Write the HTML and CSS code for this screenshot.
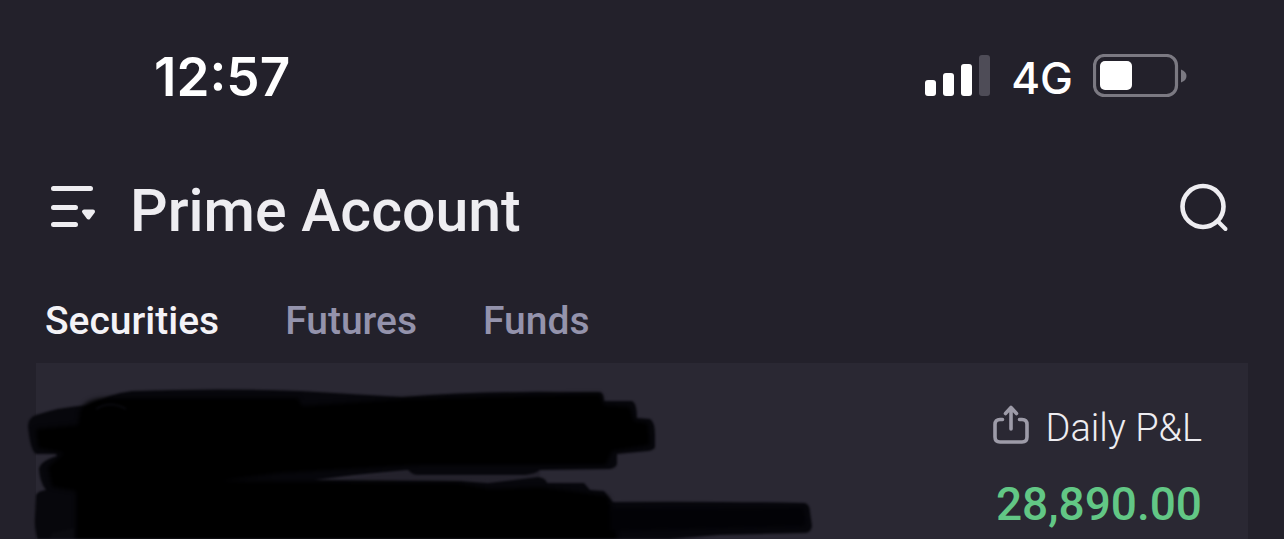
FILE: index.html
```html
<!DOCTYPE html>
<html lang="en">
<head>
<meta charset="utf-8">
<meta name="viewport" content="width=device-width, initial-scale=1">
<title>Prime Account</title>
<link rel="stylesheet" href="styles.css">
</head>
<body>
<div class="status-bar">
  <time class="clock">12:57</time>
  <div class="indicators">
    <svg class="signal" width="66" height="42" viewBox="0 0 66 42" aria-label="Signal strength">
      <rect x="0" y="25" width="11" height="16" rx="3" fill="#fff"/>
      <rect x="18" y="18" width="11" height="23" rx="3" fill="#fff"/>
      <rect x="36" y="9" width="11" height="32" rx="3" fill="#fff"/>
      <rect x="54" y="0" width="11" height="41" rx="3" fill="#4e4c57"/>
    </svg>
    <span class="network">4G</span>
    <svg class="battery" width="94" height="44" viewBox="0 0 94 44" aria-label="Battery">
      <rect x="1.5" y="1.5" width="82" height="40" rx="10" fill="none" stroke="#7b7982" stroke-width="3.2"/>
      <rect x="7" y="7" width="32" height="29" rx="5" fill="#fff"/>
      <path d="M88 15.5Q93.5 17.500 93.500 22T88 28.500Z" fill="#7b7982"/>
    </svg>
  </div>
</div>
<header class="header">
  <button class="icon-button" type="button" aria-label="Switch account">
    <svg width="46" height="44" viewBox="0 0 46 44" fill="none" stroke="#eeedf1" stroke-width="5" stroke-linecap="round">
      <path d="M3.500 2.500H40.500M3.500 21.500H25.500M3.500 38.500H25.500"/>
      <path d="M34 25.500H43L38.500 31.500Z" fill="#eeedf1" stroke-width="4" stroke-linejoin="round"/>
    </svg>
  </button>
  <h1 class="title">Prime Account</h1>
  <button class="icon-button search" type="button" aria-label="Search">
    <svg width="50" height="50" viewBox="0 0 50 50" fill="none" stroke="#eeedf1" stroke-linecap="round">
      <circle cx="24" cy="23.500" r="20.500" stroke-width="4.600"/>
      <path d="M39 38.500L46.500 46" stroke-width="4"/>
    </svg>
  </button>
</header>
<nav class="tabs">
  <a class="tab active" href="#securities" aria-current="page">Securities</a>
  <a class="tab" href="#futures">Futures</a>
  <a class="tab" href="#funds">Funds</a>
</nav>
<main class="card" id="securities">
  <svg class="scribble" width="820" height="176" viewBox="0 0 820 176" aria-hidden="true">
    <g fill="#07070c">
      <path d="M28 63Q28 55 36 52Q60 44 88 42Q108 31 132 28Q220 25 300 28Q350 31 402 34Q480 28 560 29L600 29Q604 30 604 38L632 38Q637 40 637 55L650 56Q655 59 655 72V84Q654 87 648 88L617 91V101Q616 105 610 106L540 107Q536 111 525 112L418 112Q412 112 408 107Q360 111 314 117L460 118L488 120L538 114Q546 115 547 120L584 120L590 127L604 128L613 139Q700 138 805 140Q810 142 810 149L812 163Q811 169 806 170L720 172L618 180H38Q34 164 35 154L36 132Q38 128 46 127Q40 120 39 106Q40 98 57 93L56 91L36 91Q30 87 28 63Z"/>
    </g>
    <path class="core" fill="#000" d="M80 48Q85 35 110 35L298 35L302 43L402 36L480 34L600 31L604 42L630 44L634 58L648 60L650 82L612 88L606 102L420 102L280 110L220 118L460 120L490 126L540 124L580 129L608 133L618 180H76V128L52 124L48 104L64 90L38 85L36 66L78 62Z"/>
    <path d="M96 46Q110 37 126 46" fill="none" stroke="#09090e" stroke-width="2"/>
    <path d="M48 180L52 170L74 165V180Z" fill="#0b0b10"/>
    <path class="core" d="M610 146L804 145L806 163L610 168Z" fill="#020206"/>
    <path d="M330 117L408 108Q412 113 420 113H524Q534 112 540 108V113L488 119L460 117Z" fill="#24222c"/>
  </svg>
  <section class="pnl">
    <div class="pnl-label">
      <button class="icon-button share" type="button" aria-label="Share">
        <svg width="36" height="40" viewBox="0 0 36 40" fill="none" stroke="#9d9ba8" stroke-width="3.600" stroke-linecap="round" stroke-linejoin="round">
          <path d="M9.500 14.500H7Q2 14.500 2 19.500V32Q2 37 7 37H29Q34 37 34 32V19.500Q34 14.500 29 14.500H26.500"/>
          <path d="M18 24V3M12.500 8.500L18 2.500L23.500 8.500"/>
        </svg>
      </button>
      <span>Daily P&amp;L</span>
    </div>
    <div class="pnl-value">28,890.00</div>
  </section>
</main>
</body>
</html>
```
FILE: styles.css
```css
* {
  box-sizing: border-box;
}

body {
  margin: 0;
  min-height: 100vh;
  display: flex;
  flex-direction: column;
  overflow-x: hidden;
  background: #23212b;
  color: #eeedf1;
  font-family: Roboto, "Liberation Sans", sans-serif;
}

.status-bar {
  display: flex;
  align-items: center;
  justify-content: space-between;
  height: 152px;
  padding: 0 97px 0 154px;
  color: #fff;
  font-family: Inter, "Liberation Sans", sans-serif;
}

.clock {
  padding-top: 2px;
  font-size: 53px;
  font-weight: 600;
  line-height: 64px;
}

.indicators {
  display: flex;
  align-items: center;
  gap: 20px;
}

.network {
  padding-top: 4px;
  font-size: 44px;
  font-weight: 500;
  line-height: 48px;
}

.header {
  display: flex;
  align-items: center;
  height: 112px;
  padding: 0 55px 0 50px;
}

.icon-button {
  display: flex;
  padding: 0;
  border: 0;
  background: none;
  cursor: pointer;
}

.title {
  margin: 0 0 0 34px;
  padding-top: 6px;
  font-size: 59px;
  font-weight: 500;
  line-height: 72px;
}

.search {
  margin-left: auto;
}

.tabs {
  display: flex;
  align-items: center;
  gap: 66px;
  height: 99px;
  padding: 14px 45px 0;
}

.tab {
  color: #9493ac;
  font-size: 39px;
  font-weight: 500;
  line-height: 48px;
  text-decoration: none;
}

.active {
  color: #f4f3f7;
}

.card {
  position: relative;
  flex: 1;
  display: flex;
  justify-content: flex-end;
  margin: 0 36px;
  padding: 41px 46px 0;
  background: #2a2833;
}

.scribble {
  position: absolute;
  top: 0;
  left: -36px;
  filter: blur(1px);
}

.core {
  filter: blur(2px);
}

.pnl {
  display: flex;
  flex-direction: column;
  align-items: flex-end;
  gap: 24px;
}

.pnl-label {
  display: flex;
  align-items: center;
  gap: 16px;
  font-size: 38px;
  font-weight: 300;
  line-height: 48px;
}

.share {
  padding-bottom: 6px;
}

.pnl-value {
  color: #62c785;
  font-size: 46px;
  font-weight: 500;
  line-height: 56px;
}
```
